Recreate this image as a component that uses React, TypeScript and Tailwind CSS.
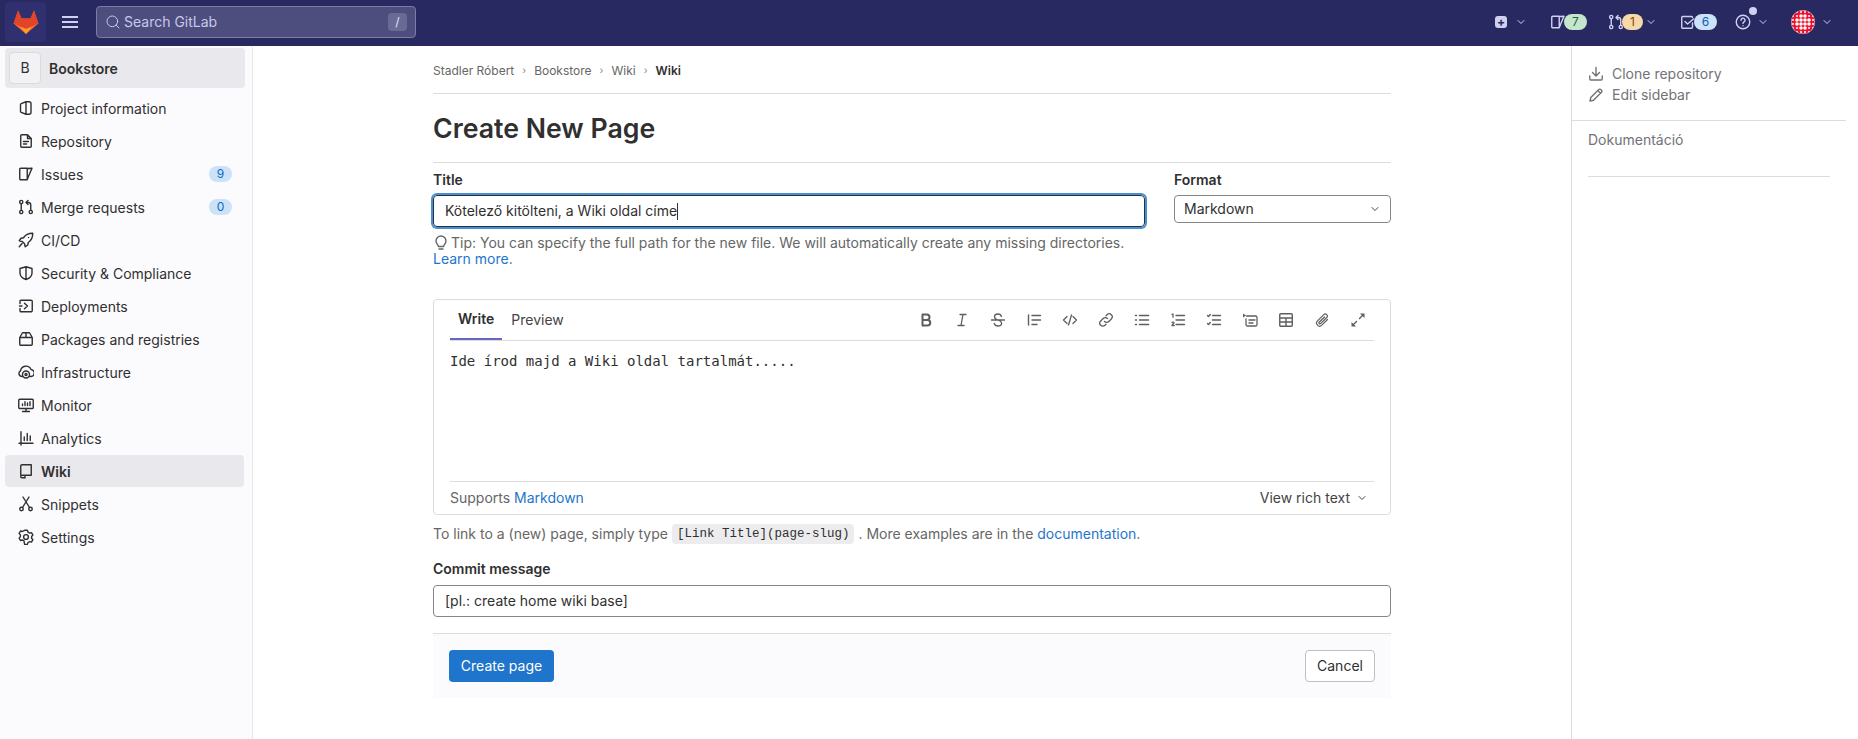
import type { ReactNode } from 'react'
import { ChevronDown, Search } from 'lucide-react'

function Icon({ children, size = 16, className = '' }: { children: ReactNode; size?: number; className?: string }) {
  return (
    <svg
      width={size}
      height={size}
      viewBox="0 0 16 16"
      fill="none"
      stroke="currentColor"
      strokeWidth="1.4"
      strokeLinecap="round"
      strokeLinejoin="round"
      className={`shrink-0 ${className}`}
    >
      {children}
    </svg>
  )
}

const issuePath = 'M2.75 2.25h6.5v11.5h-6.5a1 1 0 0 1-1-1v-9.5a1 1 0 0 1 1-1zM9.25 2.5l4.75-.25-3.25 7.5-1.5 3.75'
const mergePath = (
  <>
    <circle cx="3.25" cy="3" r="1.6" />
    <circle cx="3.25" cy="13" r="1.6" />
    <circle cx="12.75" cy="13" r="1.6" />
    <path d="M3.25 4.6v6.8M12.75 11.4V6a2.5 2.5 0 0 0-2.5-2.5H8.5M10 1.5l-2 2 2 2" />
  </>
)

const sidebarItems: { label: string; count?: number; active?: boolean; icon: ReactNode }[] = [
  {
    label: 'Project information',
    icon: <path d="M3.2 3.6 8 1.75v12.5L3.2 12.4a1 1 0 0 1-.7-.9V4.5a1 1 0 0 1 .7-.9zM8 1.75h3a2 2 0 0 1 2 2v8.5a2 2 0 0 1-2 2H8" />,
  },
  {
    label: 'Repository',
    icon: <path d="M9.5 1.75H3.75a1 1 0 0 0-1 1v10.5a1 1 0 0 0 1 1h8.5a1 1 0 0 0 1-1V5.5zM9.5 1.75V5.5h3.75M5.5 8.5h5M5.5 11h3" />,
  },
  { label: 'Issues', count: 9, icon: <path d={issuePath} /> },
  { label: 'Merge requests', count: 0, icon: mergePath },
  {
    label: 'CI/CD',
    icon: <path d="M14.75 1.25c-4.25-.1-7.25 1.5-9.25 4.5L3 6.25 1.25 8.75l3 .75 2.25 2.25.75 3 2.5-1.75.5-2.5c3-2 4.6-5 4.500-9.250zM4 11.5l-2.750 3.250M10.500 5.500h.01" />,
  },
  {
    label: 'Security & Compliance',
    icon: <path d="M8 1.75 2 3.5V8c0 3.2 2.5 5.4 6 6.5 3.5-1.1 6-3.3 6-6.5V3.5zM8 1.75V14.5" />,
  },
  {
    label: 'Deployments',
    icon: <path d="M2 5.5V3.25a1 1 0 0 1 1-1h10a1.25 1.25 0 0 1 1.25 1.25v9a1.25 1.25 0 0 1-1.25 1.250H3a1 1 0 0 1-1-1V10.500M6.500 5.250 9.500 8l-3 2.750M1.500 8H4" />,
  },
  {
    label: 'Packages and registries',
    icon: <path d="M1.75 6.5h12.5M8 1.75V6.5M4.5 1.75h7l2.75 4.75v6.75a1 1 0 0 1-1 1H2.75a1 1 0 0 1-1-1V6.5z" />,
  },
  {
    label: 'Infrastructure',
    icon: (
      <>
        <path d="M4.5 12.5H4a3 3 0 0 1-1.5-5.6A5.500 5.500 0 0 1 13 5.500a3.500 3.500 0 0 1-.5 7h-1" />
        <circle cx="8" cy="10.5" r="3.5" />
        <circle cx="8" cy="10.5" r="1" />
      </>
    ),
  },
  {
    label: 'Monitor',
    icon: <path d="M1.75 2.25h12.5a1 1 0 0 1 1 1v7.5a.75.75 0 0 1-.75.75h-13a.75.75 0 0 1-.75-.75v-7.5a1 1 0 0 1 1-1zM8 11.5v3M4.5 14.5h7M4.5 8.5V7M7 8.5V4.75M9.5 8.5V6M12 8.5V4.75" />,
  },
  {
    label: 'Analytics',
    icon: <path d="M1 13.25h14M3 1.75V15M6.25 10.5V7M9.25 10.5V3.5M12.25 10.5V6" />,
  },
  {
    label: 'Wiki',
    active: true,
    icon: <path d="M2.75 12.5V3a1.25 1.25 0 0 1 1.25-1.25h9.25v10.5H4a1.25 1.25 0 0 0 0 2.5h3M7 12.25V15" />,
  },
  {
    label: 'Snippets',
    icon: (
      <>
        <circle cx="3.5" cy="13" r="1.75" />
        <circle cx="12.5" cy="13" r="1.75" />
        <path d="M4.5 11.5 11 1M11.5 11.5 5 1" />
      </>
    ),
  },
  {
    label: 'Settings',
    icon: (
      <>
        <path d="M6.6 1.3h2.800l.6 1.900 1.600.9 1.900-.5 1.400 2.400-1.300 1.500v1.700l1.300 1.500-1.400 2.400-1.900-.5-1.600.9-.6 1.900H6.600L6 11.900l-1.600-.9-1.900.5L1.100 9.100l1.300-1.500V5.900L1.100 4.400l1.400-2.400 1.900.5L6 1.600z" />
        <circle cx="8" cy="8" r="2.4" />
      </>
    ),
  },
]

const toolbarIcons: ReactNode[] = [
  <path d="M4.5 2.5h4.25a2.75 2.75 0 0 1 0 5.5H4.5zM4.5 8h5a2.75 2.75 0 0 1 0 5.5h-5z" strokeWidth="2" />,
  <path d="M6 2.5h6M4 13.5h6M9 2.5 7 13.5" strokeWidth="1.3" />,
  <path d="M1.5 8h13M11.5 4.5C11 3 9.8 2 8 2 6 2 4.5 3.2 4.5 4.8c0 1.3 1 2.300 3.500 3.200 2.500.9 3.600 1.800 3.600 3.300C11.600 13 10 14 8 14c-2 0-3.300-1-3.800-2.500" strokeWidth="1.3" />,
  <path d="M2.5 3v10M6 3.5h8.5M6 8h8.5M6 12.5h5" strokeWidth="1.4" />,
  <path d="M5 4.5 1.5 8 5 11.5M11 4.5 14.5 8 11 11.500M9.500 3l-3 10" strokeWidth="1.3" />,
  <path d="M6.5 9.5a3 3 0 0 0 4.300 0l2.500-2.500a3 3 0 0 0-4.300-4.300L8 3.700M9.500 6.500a3 3 0 0 0-4.300 0L2.700 9a3 3 0 0 0 4.300 4.300l1-1" strokeWidth="1.3" />,
  <path d="M1.5 3.5h1M1.5 8h1M1.5 12.5h1M5.5 3.5h9M5.5 8h9M5.5 12.5h9" strokeWidth="1.5" />,
  <path d="M2 2.2h1v3M2 10.500c.5-.6 2-.6 2 .4 0 .8-2 1.600-2 2.600h2.200M6 3.500h8.500M6 8h8.500M6 12.500h8.500" strokeWidth="1.3" />,
  <path d="M1.5 3.5l1 1 1.800-2M1.500 11.500l1 1 1.800-2M6.500 3.500h8M6.500 8h8M6.500 12.500h8" strokeWidth="1.4" />,
  <>
    <path d="M1 1.5v4l3-2z" fill="currentColor" stroke="none" />
    <path d="M4.5 4h9A1.500 1.500 0 0 1 15 5.500v7a1.500 1.500 0 0 1-1.500 1.500h-8A1.500 1.500 0 0 1 4 12.500V7M7 8h6M7 11h4" strokeWidth="1.3" />
  </>,
  <path d="M2.75 1.75h10.5a1 1 0 0 1 1 1v10.5a1 1 0 0 1-1 1H2.750a1 1 0 0 1-1-1V2.750a1 1 0 0 1 1-1zM1.750 6h12.500M1.750 10h12.500M8 6v8.250" strokeWidth="1.4" />,
  <path d="M13.5 7.5 7.8 13.2a3 3 0 0 1-4.300-4.300l6.300-6.300a2 2 0 0 1 2.900 2.900L6.500 11.600a1 1 0 0 1-1.400-1.400L10.500 5" strokeWidth="1.2" />,
  <>
    <path d="M10 1.5h4.5V6z" fill="currentColor" stroke="none" />
    <path d="M1.5 14.5V10L6 14.500z" fill="currentColor" stroke="none" />
    <path d="M13 3 9.500 6.500M3 13l3.500-3.500" strokeWidth="1.4" />
  </>,
]

function Pill({ value, className }: { value: number; className: string }) {
  return (
    <span className={`flex h-4 items-center justify-center rounded-full text-xs ${className}`}>{value}</span>
  )
}

function Avatar() {
  const dots: ReactNode[] = []
  for (let x = 2; x < 24; x += 4) {
    for (let y = 2; y < 24; y += 4) {
      const dist = Math.hypot(x - 12, y - 12)
      dots.push(<circle key={`${x}-${y}`} cx={x} cy={y} r={dist < 7 ? 1.8 : 1} fill="#fff" />)
    }
  }
  return (
    <svg width="24" height="24" viewBox="0 0 24 24">
      <defs>
        <clipPath id="globe">
          <circle cx="12" cy="12" r="11.5" />
        </clipPath>
      </defs>
      <circle cx="12" cy="12" r="12" fill="#d9c9e8" />
      <g clipPath="url(#globe)">
        <circle cx="12" cy="12" r="12" fill="#f0102d" />
        {dots}
      </g>
    </svg>
  )
}

function Navbar() {
  return (
    <header className="flex h-[46px] items-center bg-[#292961] pb-[2px] text-[#d1d0f1]">
      <div className="ml-[5px] flex h-10 w-[41px] items-center justify-center rounded bg-[#303070]">
        <svg width="26" height="24" viewBox="0 0 26 24">
          <path d="M13 24 .6 13.500 5 .5l3.500 8h9L21 .5l4.400 13z" fill="#fc6d26" />
          <path d="M.6 13.500 5 .5l3.500 8h9L21 .5l4.400 13L13 19z" fill="#e24329" />
          <path d="M13 24 7.500 16.800 13 19l5.500-2.200z" fill="#fca326" />
        </svg>
      </div>
      <button className="ml-[16px] flex w-4 flex-col gap-[3px]">
        <span className="h-[2px] w-4 bg-[#d1d0f1]" />
        <span className="h-[2px] w-4 bg-[#d1d0f1]" />
        <span className="h-[2px] w-4 bg-[#d1d0f1]" />
      </button>
      <div className="ml-[18px] flex h-8 w-[320px] items-center rounded border border-[#7b7ba8] bg-[#4e4e7e] px-2">
        <Search className="h-4 w-4 text-[#c8c7ea]" strokeWidth={1.5} />
        <span className="ml-[3px] text-sm text-[#c8c7ea]">Search GitLab</span>
        <span className="ml-auto flex h-[18px] w-[19px] items-center justify-center rounded-sm bg-[#6a6a96] text-xs text-[#e4e3f5]">/</span>
      </div>
      <div className="ml-auto flex items-center pr-[25px]">
        <span className="flex h-[12px] w-3 items-center justify-center rounded-[3px] bg-[#d1d0f1] text-xs font-bold leading-none text-[#292961]">+</span>
        <ChevronDown className="ml-2 h-3 w-3" strokeWidth={2} />
        <div className="ml-[23px] flex items-center">
          <Icon><path d={issuePath} /></Icon>
          <Pill value={7} className="-ml-[2px] w-[23px] bg-[#c3e6cd] text-[#24663b]" />
        </div>
        <div className="ml-[21px] flex items-center">
          <Icon>{mergePath}</Icon>
          <Pill value={1} className="-ml-[2px] w-[21px] bg-[#f5d9a8] text-[#8f4700]" />
          <ChevronDown className="ml-[2px] h-3 w-3" strokeWidth={2} />
        </div>
        <div className="ml-[23px] flex items-center">
          <Icon><path d="M12.5 9v4.25a1 1 0 0 1-1 1H2.75a1 1 0 0 1-1-1V3.5a1 1 0 0 1 1-1h8.75a1 1 0 0 1 1 1M5 7.5 7.5 10l6-5" /></Icon>
          <Pill value={6} className="-ml-[2px] w-[23px] bg-[#cbe2f9] text-[#0b5cad]" />
        </div>
        <div className="relative ml-[18px] flex items-center">
          <Icon>
            <circle cx="8" cy="8" r="6.75" />
            <path d="M6 6.2a2 2 0 1 1 3 1.700c-.6.4-1 .8-1 1.500M8 11.600v.1" />
          </Icon>
          <span className="absolute left-[14px] top-[-7px] h-2 w-2 rounded-full bg-[#d1d0f1]" />
          <ChevronDown className="ml-[6px] h-3 w-3" strokeWidth={2} />
        </div>
        <div className="ml-[22px] flex items-center">
          <Avatar />
          <ChevronDown className="ml-[6px] h-3 w-3" strokeWidth={2} />
        </div>
      </div>
    </header>
  )
}

function Sidebar() {
  return (
    <aside className="w-[253px] shrink-0 border-r border-[#e9e9e9] bg-[#fbfafd] pl-[5px] pr-2 pt-[2px] text-sm text-[#303030]">
      <div className="flex h-10 w-[240px] items-center rounded bg-[#e9e8ec] pl-[4px]">
        <span className="flex h-8 w-8 items-center justify-center rounded border border-[#dbdbdb] bg-[#f2f1f4] text-sm text-[#303030]">B</span>
        <span className="ml-2 pt-[2px] font-semibold">Bookstore</span>
      </div>
      <ul className="pt-[4px]">
        {sidebarItems.map((item) => (
          <li
            key={item.label}
            className={`mb-px flex h-8 w-[239px] items-center rounded pl-[13px] ${item.active ? 'bg-[#e9e8ec] font-semibold' : ''}`}
          >
            <Icon className="text-[#303030]">{item.icon}</Icon>
            <span className="ml-[7px] pt-[2px]">{item.label}</span>
            {item.count !== undefined && (
              <span className="ml-auto mr-3 flex h-4 w-[23px] items-center justify-center rounded-full bg-[#cbe2f9] text-xs text-[#1068bf]">
                {item.count}
              </span>
            )}
          </li>
        ))}
      </ul>
    </aside>
  )
}

function Breadcrumbs() {
  const crumbs = ['Stadler Róbert', 'Bookstore', 'Wiki']
  return (
    <nav className="flex h-[48px] items-center border-b border-[#dcdcde] pt-[2px] text-xs text-[#666]">
      {crumbs.map((c) => (
        <span key={c} className="flex items-center">
          {c}
          <span className="mx-[8px] text-[10px] text-[#888]">›</span>
        </span>
      ))}
      <span className="font-semibold text-[#303030]">Wiki</span>
    </nav>
  )
}

function Main() {
  return (
    <main className="flex-1">
      <div className="mx-auto w-[958px] text-sm text-[#303030]">
        <Breadcrumbs />
        <h1 className="flex h-[69px] items-center border-b border-[#dcdcde] pt-[1px] text-[26.7px] font-semibold">Create New Page</h1>
        <div className="mt-[9px] flex gap-[29px]">
          <div className="w-[712px]">
            <label className="block h-[23px] font-semibold leading-4">Title</label>
            <div className="flex h-8 items-center rounded border border-[#303030] px-[11px] ring-2 ring-[#428fdc]">
              Kötelező kitölteni, a Wiki oldal címe
              <span className="h-[17px] w-px bg-[#303030]" />
            </div>
            <p className="mt-[8px] w-[730px] leading-4 text-[#666]">
              <span className="inline-flex items-center align-[-3px]">
                <Icon className="mr-[2px]"><path d="M5.5 11.5C5 9.500 3 8.500 3 6a5 5 0 0 1 10 0c0 2.500-2 3.500-2.500 5.500zM6 14h4" /></Icon>
              </span>
              Tip: You can specify the full path for the new file. We will automatically create any missing directories.{' '}
              <span className="text-[#1f75cb]">Learn more.</span>
            </p>
          </div>
          <div className="w-[217px]">
            <label className="block h-[23px] font-semibold leading-4">Format</label>
            <div className="flex h-7 items-center justify-between rounded border border-[#868686] px-[9px]">
              Markdown
              <ChevronDown className="h-3 w-3 text-[#444]" strokeWidth={2} />
            </div>
          </div>
        </div>
        <section className="mt-[32px] rounded border border-[#dcdcde] px-4">
          <div className="flex h-[41px] items-center justify-between border-b border-[#dcdcde]">
            <div className="flex h-full items-stretch">
              <span className="flex items-center border-b-2 border-[#6666c4] px-2 font-semibold">Write</span>
              <span className="ml-px flex items-center px-2 text-[#444]">Preview</span>
            </div>
            <div className="flex items-center gap-[20px] pr-[8px] text-[#5e5e5e]">
              {toolbarIcons.map((icon, i) => (
                <Icon key={i}>{icon}</Icon>
              ))}
            </div>
          </div>
          <div className="h-[140px] pt-[10px] font-['DejaVu_Sans_Mono',monospace] leading-[20px] text-[#303030]">
            Ide írod majd a Wiki oldal tartalmát.....
          </div>
          <div className="flex h-[33px] items-center justify-between border-t border-[#dcdcde] text-[#666]">
            <span>
              Supports <span className="text-[#1f75cb]">Markdown</span>
            </span>
            <span className="flex items-center pr-[6px] text-[#444]">
              View rich text
              <ChevronDown className="ml-[6px] h-3 w-3" strokeWidth={2} />
            </span>
          </div>
        </section>
        <p className="mt-[9px] flex h-[20px] items-center text-[#666]">
          To link to a (new) page, simply type
          <code className="mx-[4px] rounded bg-[#ececef] px-[5px] py-[2px] font-['Liberation_Mono',monospace] text-[12.5px] leading-4 text-[#303030]">[Link Title](page-slug)</code>
          . More examples are in the&nbsp;<span className="text-[#1f75cb]">documentation</span>.
        </p>
        <label className="mt-[17px] block h-[24px] font-semibold leading-4">Commit message</label>
        <div className="flex h-8 items-center rounded border border-[#868686] px-[11px]">[pl.: create home wiki base]</div>
        <div className="mt-[16px] flex h-[65px] items-center justify-between border-t border-[#dcdcde] bg-[#fbfafd] px-4">
          <button className="flex h-8 w-[105px] items-center justify-center rounded bg-[#1f75cb] text-white">Create page</button>
          <button className="flex h-8 w-[70px] items-center justify-center rounded border border-[#bfbfc3] bg-white text-[#303030]">Cancel</button>
        </div>
      </div>
    </main>
  )
}

function RightSidebar() {
  return (
    <aside className="w-[287px] shrink-0 border-l border-[#dcdcde] pr-3 text-sm text-[#737278]">
      <div className="border-b border-[#dcdcde] pb-[15px] pl-4 pt-[17px]">
        <div className="flex h-[21px] items-center">
          <Icon><path d="M8 1.5v8M4.5 6.5 8 10l3.5-3.5M1.75 10v3a1 1 0 0 0 1 1h10.5a1 1 0 0 0 1-1v-3" /></Icon>
          <span className="ml-2">Clone repository</span>
        </div>
        <div className="flex h-[21px] items-center">
          <Icon><path d="M2 14l.8-3.5 8-8a1.400 1.400 0 0 1 2 0l.7.7a1.400 1.400 0 0 1 0 2l-8 8zM9.800 3.500l2.700 2.700" /></Icon>
          <span className="ml-2">Edit sidebar</span>
        </div>
      </div>
      <div className="mx-4 h-[56px] border-b border-[#dcdcde] pt-[9px] leading-5">Dokumentáció</div>
    </aside>
  )
}

export default function App() {
  return (
    <div className="flex h-[739px] flex-col overflow-hidden bg-white font-['Inter',sans-serif]">
      <Navbar />
      <div className="flex flex-1">
        <Sidebar />
        <Main />
        <RightSidebar />
      </div>
    </div>
  )
}
